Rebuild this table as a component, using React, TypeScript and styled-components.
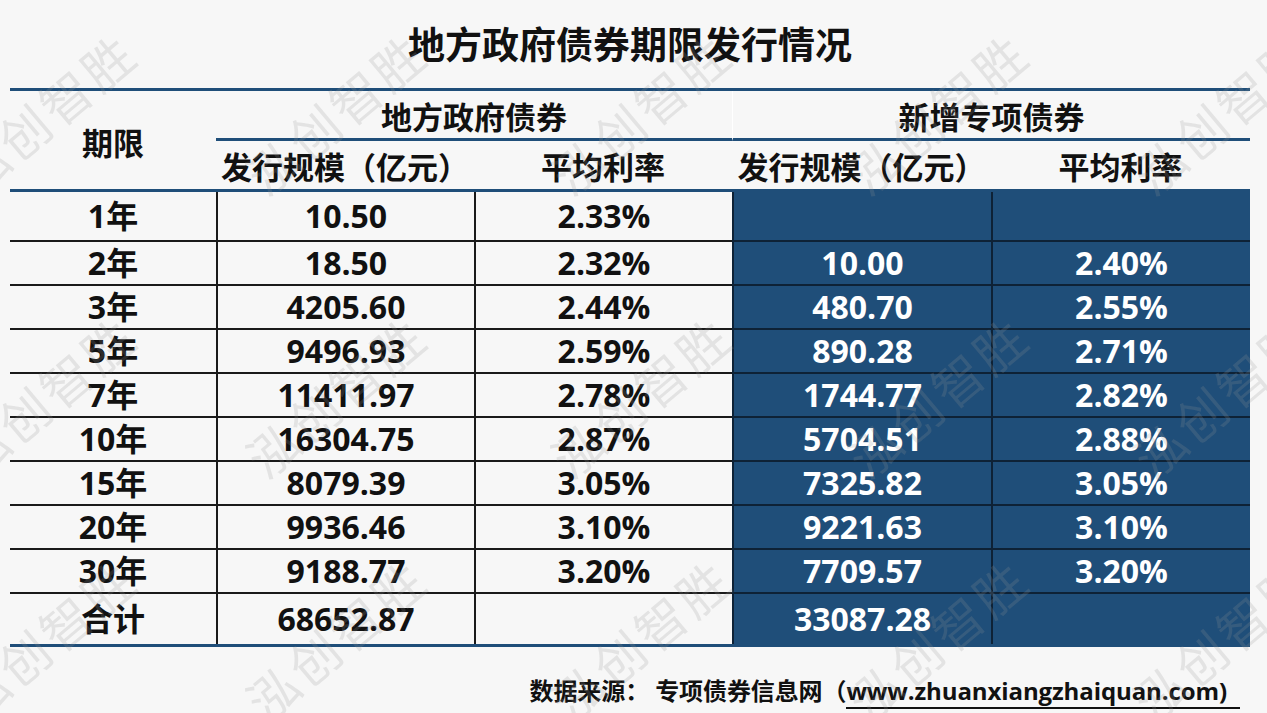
import React from "react";
import styled, { createGlobalStyle } from "styled-components";

const BLUE = "#1f4e79";
const LINE = "#1a1a1a";

const GlobalStyle = createGlobalStyle`
  html, body {
    margin: 0;
    padding: 0;
    background: #f7f7f7;
  }
  body {
    font-family: "Open Sans", "Noto Sans CJK SC", sans-serif;
  }
  * {
    box-sizing: border-box;
  }
`;

const Page = styled.div`
  position: relative;
  width: 1267px;
  height: 713px;
  overflow: hidden;
  background: #f7f7f7;
  display: flex;
  flex-direction: column;
  padding: 0 17px 0 10px;
`;

const Title = styled.h1`
  margin: 0;
  height: 88px;
  flex: none;
  display: flex;
  align-items: center;
  justify-content: center;
  font-family: "Noto Sans CJK SC", sans-serif;
  font-size: 37px;
  font-weight: 700;
  color: #111;
  padding-bottom: 2px;
`;

const Grid = styled.div`
  flex: none;
  width: 1240px;
  display: grid;
  grid-template-columns: 206px 258px 258px 259px 259px;
  grid-template-rows: 50px 51px 50px repeat(8, 44px) 50px;
  border-top: 3px solid ${BLUE};
  border-bottom: 3px solid ${BLUE};
`;

const HeadCell = styled.div`
  display: flex;
  align-items: center;
  justify-content: center;
  font-family: "Noto Sans CJK SC", sans-serif;
  font-size: 31px;
  font-weight: 700;
  color: #111;
  line-height: 1;
  white-space: nowrap;
  border-bottom: 3px solid ${BLUE};
`;

const CornerCell = styled(HeadCell)`
  grid-row: span 2;
  padding-top: 2px;
`;

const GroupCell = styled(HeadCell)<{ $split?: boolean }>`
  grid-column: span 2;
  padding-top: 2px;
  border-left: ${p => (p.$split ? "1px solid #ffffff" : "none")};
`;

const Cell = styled.div<{ $blue?: boolean; $first?: boolean; $last?: boolean }>`
  display: flex;
  align-items: center;
  justify-content: center;
  font-size: 32px;
  font-weight: 700;
  line-height: 1;
  white-space: nowrap;
  color: ${p => (p.$blue ? "#ffffff" : "#111111")};
  background: ${p => (p.$blue ? BLUE : "transparent")};
  border-left: ${p => (p.$first ? "none" : `2px solid ${p.$blue ? "#0e2236" : LINE}`)};
  border-bottom: ${p => (p.$last ? "none" : `2px solid ${p.$blue ? "#0e2236" : LINE}`)};
`;

const Footer = styled.div`
  flex: 1;
  display: flex;
  justify-content: flex-end;
  align-items: flex-start;
  padding-top: 30px;
  padding-right: 10px;
  font-size: 24px;
  font-weight: 700;
  color: #111;
  line-height: 1.15;
`;

const Source = styled.span`
  font-family: "Open Sans", "Noto Sans CJK SC", sans-serif;
  letter-spacing: -0.1px;
`;

const Link = styled.span`
  border-bottom: 2px solid #111;
  padding-right: 13px;
`;

const Watermarks = styled.div`
  position: absolute;
  inset: 0;
  pointer-events: none;
`;

const Mark = styled.div`
  position: absolute;
  width: 0;
  height: 0;
  display: flex;
  align-items: center;
  justify-content: center;
  white-space: nowrap;
  font-family: "Noto Sans CJK SC", sans-serif;
  font-size: 50px;
  font-weight: 400;
  letter-spacing: 4px;
  color: rgba(150, 150, 150, 0.2);
  transform: rotate(-40deg);
`;

const rows: string[][] = [
  ["1年", "10.50", "2.33%", "", ""],
  ["2年", "18.50", "2.32%", "10.00", "2.40%"],
  ["3年", "4205.60", "2.44%", "480.70", "2.55%"],
  ["5年", "9496.93", "2.59%", "890.28", "2.71%"],
  ["7年", "11411.97", "2.78%", "1744.77", "2.82%"],
  ["10年", "16304.75", "2.87%", "5704.51", "2.88%"],
  ["15年", "8079.39", "3.05%", "7325.82", "3.05%"],
  ["20年", "9936.46", "3.10%", "9221.63", "3.10%"],
  ["30年", "9188.77", "3.20%", "7709.57", "3.20%"],
  ["合计", "68652.87", "", "33087.28", ""],
];

const markXs = [45, 335, 640, 937, 1222];
const markYs = [112, 395, 638];

const App = () => {
  return (
    <>
      <GlobalStyle />
      <Page>
        <Title>地方政府债券期限发行情况</Title>
        <Grid>
          <CornerCell>期限</CornerCell>
          <GroupCell>地方政府债券</GroupCell>
          <GroupCell $split>新增专项债券</GroupCell>
          <HeadCell>发行规模（亿元）</HeadCell>
          <HeadCell>平均利率</HeadCell>
          <HeadCell>发行规模（亿元）</HeadCell>
          <HeadCell>平均利率</HeadCell>
          {rows.map((r, i) =>
            r.map((v, j) => (
              <Cell
                key={`${i}-${j}`}
                $first={j === 0}
                $blue={j >= 3}
                $last={i === rows.length - 1}
              >
                {v}
              </Cell>
            ))
          )}
        </Grid>
        <Footer>
          <Source>
            数据来源： 专项债券信息网（<Link>www.zhuanxiangzhaiquan.com)</Link>
          </Source>
        </Footer>
        <Watermarks aria-hidden="true">
          {markYs.map(y =>
            markXs.map(x => (
              <Mark key={`${x}-${y}`} style={{ left: x, top: y }}>
                泓创智胜
              </Mark>
            ))
          )}
        </Watermarks>
      </Page>
    </>
  );
};

export default App;
